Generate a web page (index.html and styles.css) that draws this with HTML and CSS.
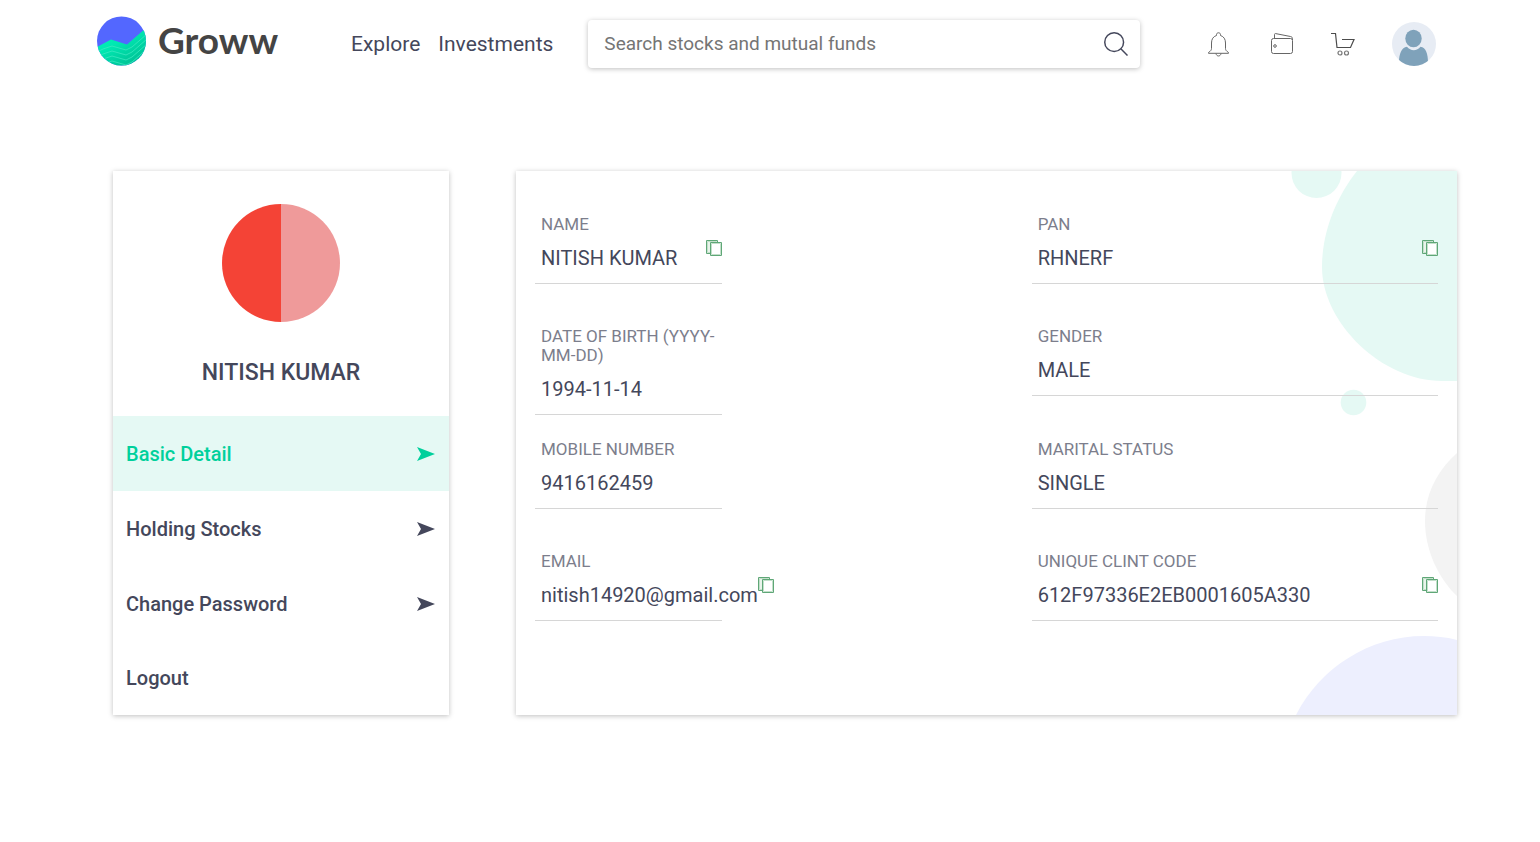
FILE: index.html
```html
<!DOCTYPE html>
<html lang="en">
<head>
<meta charset="utf-8">
<meta name="viewport" content="width=device-width, initial-scale=1">
<title>Groww</title>
<link rel="stylesheet" href="styles.css">
</head>
<body>
<svg class="sprite" aria-hidden="true">
  <symbol id="copy" viewBox="0 0 16 16">
    <path d="M.5.5h11v13H.5z" fill="#fff" stroke="#5fa777"/>
    <path d="M1.500 1.500h9v11h-9z" fill="#e9f4eb" stroke="#c3dfca"/>
    <path d="M4.500 2.500h11v13h-11z" fill="#fff" stroke="#5fa777"/>
    <path d="M5.500 3.500h9v11h-9z" fill="none" stroke="#c3dfca"/>
  </symbol>
  <symbol id="arrow" viewBox="0 0 18 14"><path d="M0 0l18 7-18 7 4-7z" fill="currentColor"/></symbol>
</svg>

<header class="header">
  <a class="logo" href="#">
    <svg class="logo-mark" viewBox="0 0 50 50" aria-hidden="true">
      <defs>
        <clipPath id="disc"><circle cx="24.500" cy="25" r="24.500"/></clipPath>
        <linearGradient id="wave" x1="0" y1="0" x2=".7" y2="1"><stop offset="0" stop-color="#00f5bd"/><stop offset=".45" stop-color="#00e9b2"/><stop offset="1" stop-color="#00bf93"/></linearGradient>
      </defs>
      <g clip-path="url(#disc)">
        <path d="M0 0h50v50H0z" fill="#5367ff"/>
        <path d="M0 31l14-7.500 16 5L50 11v39H0z" fill="url(#wave)"/>
        <g fill="none" stroke="#3be8c0" stroke-width=".8">
          <path d="M0 36l6-3 9-3 14 4 6-3 15-13"/>
          <path d="M0 41l6-3 9-3 14 4 6-3 15-13"/>
          <path d="M0 46l6-3 9-3 14 4 6-3 15-13"/>
          <path d="M6 48l9-3 14 4 6-3 15-13"/>
        </g>
      </g>
    </svg>
    <span class="logo-text">Groww</span>
  </a>
  <nav class="nav">
    <a href="#">Explore</a>
    <a href="#">Investments</a>
  </nav>
  <form class="search">
    <input type="text" placeholder="Search stocks and mutual funds" aria-label="Search stocks and mutual funds">
    <button type="button" aria-label="Search">
      <svg width="24" height="24" viewBox="0 0 26 26" fill="none" stroke="#44475b" stroke-width="1.600"><circle cx="11" cy="11" r="10.200"/><path d="M18.500 18.500l7 7"/></svg>
    </button>
  </form>
  <div class="actions">
    <button type="button" aria-label="Notifications">
      <svg class="bell" width="24" height="26" viewBox="1 -1 24 26" fill="none" stroke="#666"><path d="M8.500 3.500V2.700c0-2.600 4-2.600 4 0v.8c3.300 1 5 3.700 5 7.500v5.500c0 1.500.8 2.500 3 4v.8H.5v-.8c2.200-1.500 3-2.500 3-4V11c0-3.800 1.700-6.500 5-7.500zM8 21.500c.5 3.300 4.500 3.300 5 0"/></svg>
    </button>
    <button type="button" aria-label="Wallet">
      <svg width="24" height="24" viewBox="0 0 24 24" fill="none" stroke="#666"><rect x="1.500" y="6.500" width="21" height="15" rx="2"/><path d="M4.500 6.500v-4c0-.8.500-1 1.200-.9l14.800 2.900c1.300.3 2 1 2 2v1.500"/><circle cx="5" cy="14" r="1.300"/></svg>
    </button>
    <button type="button" aria-label="Cart">
      <svg width="24" height="24" viewBox="0 0 24 24" fill="none" stroke="#4c4c4c" stroke-width="1.200"><path d="M0 1.500h4.500l1.500 14h13.500l3.500-8H11"/><g stroke="#777"><circle cx="9" cy="21" r="2"/><circle cx="15.500" cy="21" r="2"/></g></svg>
    </button>
    <button type="button" aria-label="Account">
      <svg width="44" height="44" viewBox="0 0 44 44"><defs><clipPath id="face"><circle cx="22" cy="22" r="22"/></clipPath></defs><g clip-path="url(#face)"><path d="M0 0h44v44H0z" fill="#e7ecf4"/><g fill="#7fa2ba"><ellipse cx="21.500" cy="16.500" rx="8.200" ry="8.700"/><path d="M7 40c0-8 2.500-14.500 8-15.300 3.500 4.600 10 4.600 13.500 0C34 25.500 36 32 36 40l-6 4H13z"/></g></g></svg>
    </button>
  </div>
</header>

<main class="main">
  <aside class="card profile">
    <div class="avatar"></div>
    <h1>NITISH KUMAR</h1>
    <nav class="menu">
      <a class="active" href="#">Basic Detail <svg><use href="#arrow"/></svg></a>
      <a href="#">Holding Stocks <svg><use href="#arrow"/></svg></a>
      <a href="#">Change Password <svg><use href="#arrow"/></svg></a>
      <a href="#">Logout</a>
    </nav>
  </aside>

  <section class="card details">
    <svg class="bubbles" viewBox="0 0 200 544" aria-hidden="true">
      <g fill="#e5f9f4"><circle cx="59.500" cy="2" r="25"/><path d="M100 0C78 28 65 62 65 96c0 56 60 114 120 114h15V0z"/><circle cx="96.500" cy="231.500" r="12.800"/></g>
      <path d="M200 282c-20 18-32 41-32 68 0 30 14 58 32 75z" fill="#f3f3f3"/>
      <path d="M39 544c24-47 73-79 128-79 11 0 22 1 33 4v75z" fill="#edeffe"/>
    </svg>
    <dl class="fields">
      <div class="field"><dt>NAME</dt><dd>NITISH KUMAR <button type="button" aria-label="Copy name"><svg><use href="#copy"/></svg></button></dd></div>
      <div class="field"><dt>PAN</dt><dd>RHNERF <button type="button" aria-label="Copy PAN"><svg><use href="#copy"/></svg></button></dd></div>
      <div class="field"><dt>DATE OF BIRTH (YYYY-MM-DD)</dt><dd>1994-11-14</dd></div>
      <div class="field"><dt>GENDER</dt><dd>MALE</dd></div>
      <div class="field"><dt>MOBILE NUMBER</dt><dd>9416162459</dd></div>
      <div class="field"><dt>MARITAL STATUS</dt><dd>SINGLE</dd></div>
      <div class="field"><dt>EMAIL</dt><dd>nitish14920@gmail.com<button type="button" aria-label="Copy email"><svg><use href="#copy"/></svg></button></dd></div>
      <div class="field"><dt>UNIQUE CLINT CODE</dt><dd>612F97336E2EB0001605A330 <button type="button" aria-label="Copy code"><svg><use href="#copy"/></svg></button></dd></div>
    </dl>
  </section>
</main>
</body>
</html>
```
FILE: styles.css
```css
* { box-sizing: border-box; }
body {
  margin: 0;
  background: #fff;
  color: #44475b;
  font-family: Roboto, "Liberation Sans", sans-serif;
}
a { color: inherit; text-decoration: none; }
button { padding: 0; border: 0; background: none; cursor: pointer; display: flex; }
.sprite { display: none; }

.header {
  display: flex;
  align-items: center;
  height: 88px;
  padding: 0 104px 0 97px;
}
.logo {
  display: flex;
  align-items: center;
  gap: 11px;
  width: 254px;
  padding-bottom: 6px;
}
.logo-mark { width: 50px; height: 50px; }
.logo-text { padding-bottom: 2px; font: 700 37px/48px Lato, sans-serif; color: #444; }
.nav { display: flex; gap: 18px; margin-right: 35px; font-size: 21px; line-height: 24px; }
.search {
  flex: 1;
  display: flex;
  align-items: center;
  height: 48px;
  padding: 0 12px 0 16px;
  border-radius: 4px;
  background: #fff;
  box-shadow: 0 1px 5px rgba(0, 0, 0, .25);
}
.search input {
  flex: 1;
  min-width: 0;
  padding: 0;
  border: 0;
  outline: 0;
  background: none;
  color: #44475b;
  font: 19px/24px Roboto, sans-serif;
}
.search input::placeholder { color: #757575; }
.actions { display: flex; align-items: center; gap: 37px; margin-left: 69px; }
.bell { overflow: visible; }

.main {
  display: flex;
  gap: 67px;
  padding: 83px 83px 48px 113px;
}
.card { background: #fff; box-shadow: 0 1px 5px rgba(0, 0, 0, .25); }
.profile { width: 336px; flex: none; text-align: center; }
.avatar {
  width: 118px;
  height: 118px;
  margin: 33px auto 0;
  border-radius: 50%;
  background: linear-gradient(90deg, #f44336 50%, #ef9a9a 50%);
}
.profile h1 { margin: 36px 0 29px; font-size: 23px; line-height: 29px; font-weight: 500; }
.menu a {
  display: flex;
  align-items: center;
  justify-content: space-between;
  height: 75px;
  padding: 0 14px 0 13px;
  font-size: 20px;
  font-weight: 500;
}
.menu a:last-child { height: 74px; }
.menu svg { width: 18px; height: 14px; }
.menu .active { background: #e5f9f4; color: #00d09c; }

.details { flex: 1; position: relative; }
.bubbles { position: absolute; top: 0; right: 0; width: 200px; height: 100%; }
.fields {
  position: relative;
  display: grid;
  grid-template-columns: 11fr 9fr;
  grid-template-rows: repeat(4, minmax(0, 1fr));
  height: 449px;
  margin: 44px 19px 0;
}
.field:nth-child(odd) { width: 187px; }
.field dt {
  padding-left: 6px;
  color: #7c7e8c;
  font-size: 17px;
  line-height: 19px;
}
.field dd {
  display: flex;
  justify-content: space-between;
  height: 50px;
  margin: 0;
  padding: 6px 0 0 6px;
  border-bottom: 1px solid #d6d6d6;
  font-size: 20px;
  line-height: 36px;
  white-space: nowrap;
}
.field svg { width: 16px; height: 16px; }
.field button { align-self: flex-start; }
```
